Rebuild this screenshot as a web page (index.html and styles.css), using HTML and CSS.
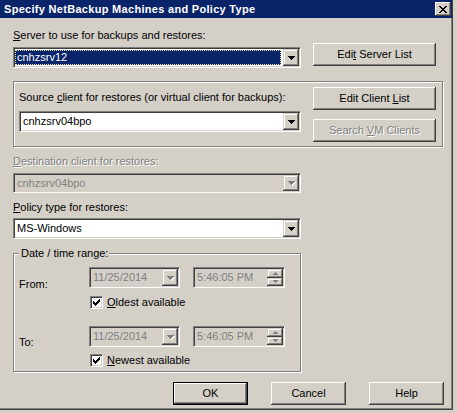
FILE: index.html
```html
<!DOCTYPE html>
<html>
<head>
<meta charset="utf-8">
<title>Specify NetBackup Machines and Policy Type</title>
<link rel="stylesheet" href="styles.css">
</head>
<body>
<div class="window">
  <div class="titlebar">
    <span class="title">Specify NetBackup Machines and Policy Type</span>
    <span class="close">
      <svg width="8" height="7" viewBox="0 0 8 7" shape-rendering="crispEdges"><path d="M0 0h2v1H0zM6 0h2v1H6zM1 1h2v1H1zM5 1h2v1H5zM2 2h4v1H2zM3 3h2v1H3zM2 4h4v1H2zM1 5h2v1H1zM5 5h2v1H5zM0 6h2v1H0zM6 6h2v1H6z" fill="#000"/></svg>
    </span>
  </div>
  <div class="content">
    <div class="server-row">
      <div class="col-server">
        <div class="label"><u>S</u>erver to use for backups and restores:</div>
        <div class="combo combo-server">
          <div class="combo-text sel">cnhzsrv12</div>
          <span class="drop"><svg width="7" height="4" viewBox="0 0 7 4" shape-rendering="crispEdges"><path d="M0 0h7v1H0zM1 1h5v1H1zM2 2h3v1H2zM3 3h1v1H3z" fill="#000"/></svg></span>
        </div>
      </div>
      <button class="btn btn-side btn-server"><span>Edi<u>t</u> Server List</span></button>
    </div>

    <div class="group group-client">
      <div class="col-client">
        <div class="label">Source <u>c</u>lient for restores (or virtual client for backups):</div>
        <div class="combo combo-client">
          <div class="combo-text">cnhzsrv04bpo</div>
          <span class="drop"><svg width="7" height="4" viewBox="0 0 7 4" shape-rendering="crispEdges"><path d="M0 0h7v1H0zM1 1h5v1H1zM2 2h3v1H2zM3 3h1v1H3z" fill="#000"/></svg></span>
        </div>
      </div>
      <div class="col-buttons">
        <button class="btn btn-side"><span>Edit Client <u>L</u>ist</span></button>
        <button class="btn btn-side btn-vm disabled"><span>Search <u>V</u>M Clients</span></button>
      </div>
    </div>

    <div class="label label-dest disabled-text"><u>D</u>estination client for restores:</div>
    <div class="combo combo-dest is-disabled">
      <div class="combo-text">cnhzsrv04bpo</div>
      <span class="drop"><svg width="8" height="5" viewBox="0 0 8 5" shape-rendering="crispEdges"><path d="M1 1h7v1H1zM2 2h5v1H2zM3 3h3v1H3zM4 4h1v1H4z" fill="#fff"/><path d="M0 0h7v1H0zM1 1h5v1H1zM2 2h3v1H2zM3 3h1v1H3z" fill="#808080"/></svg></span>
    </div>

    <div class="label label-policy"><u>P</u>olicy type for restores:</div>
    <div class="combo combo-policy">
      <div class="combo-text">MS-Windows</div>
      <span class="drop"><svg width="7" height="4" viewBox="0 0 7 4" shape-rendering="crispEdges"><path d="M0 0h7v1H0zM1 1h5v1H1zM2 2h3v1H2zM3 3h1v1H3z" fill="#000"/></svg></span>
    </div>

    <fieldset class="daterange">
      <legend>Date / time range:</legend>
      <div class="dt-row">
        <span class="dt-label">From:</span>
        <div class="picker picker-date">
          <span class="picker-text">11/25/2014</span>
          <span class="drop"><svg width="8" height="5" viewBox="0 0 8 5" shape-rendering="crispEdges"><path d="M1 1h7v1H1zM2 2h5v1H2zM3 3h3v1H3zM4 4h1v1H4z" fill="#fff"/><path d="M0 0h7v1H0zM1 1h5v1H1zM2 2h3v1H2zM3 3h1v1H3z" fill="#808080"/></svg></span>
        </div>
        <div class="picker picker-time">
          <span class="picker-text">5:46:05 PM</span>
          <span class="spin">
            <span class="spin-btn"><svg width="5" height="3" viewBox="0 0 5 3" shape-rendering="crispEdges"><path d="M2 0h1v1H2zM1 1h3v1H1zM0 2h5v1H0z" fill="#808080"/></svg></span>
            <span class="spin-btn"><svg width="5" height="3" viewBox="0 0 5 3" shape-rendering="crispEdges"><path d="M0 0h5v1H0zM1 1h3v1H1zM2 2h1v1H2z" fill="#808080"/></svg></span>
          </span>
        </div>
      </div>
      <div class="check-row">
        <span class="checkbox"><svg width="7" height="7" viewBox="0 0 7 7" shape-rendering="crispEdges"><path d="M6 0h1v1H6zM5 1h2v1H5zM0 2h1v1H0zM4 2h3v1H4zM0 3h2v1H0zM3 3h3v1H3zM0 4h5v1H0zM1 5h3v1H1zM2 6h1v1H2z" fill="#000"/></svg></span>
        <span class="check-text"><u>O</u>ldest available</span>
      </div>
      <div class="dt-row dt-row-to">
        <span class="dt-label">To:</span>
        <div class="picker picker-date">
          <span class="picker-text">11/25/2014</span>
          <span class="drop"><svg width="8" height="5" viewBox="0 0 8 5" shape-rendering="crispEdges"><path d="M1 1h7v1H1zM2 2h5v1H2zM3 3h3v1H3zM4 4h1v1H4z" fill="#fff"/><path d="M0 0h7v1H0zM1 1h5v1H1zM2 2h3v1H2zM3 3h1v1H3z" fill="#808080"/></svg></span>
        </div>
        <div class="picker picker-time">
          <span class="picker-text">5:46:05 PM</span>
          <span class="spin">
            <span class="spin-btn"><svg width="5" height="3" viewBox="0 0 5 3" shape-rendering="crispEdges"><path d="M2 0h1v1H2zM1 1h3v1H1zM0 2h5v1H0z" fill="#808080"/></svg></span>
            <span class="spin-btn"><svg width="5" height="3" viewBox="0 0 5 3" shape-rendering="crispEdges"><path d="M0 0h5v1H0zM1 1h3v1H1zM2 2h1v1H2z" fill="#808080"/></svg></span>
          </span>
        </div>
      </div>
      <div class="check-row">
        <span class="checkbox"><svg width="7" height="7" viewBox="0 0 7 7" shape-rendering="crispEdges"><path d="M6 0h1v1H6zM5 1h2v1H5zM0 2h1v1H0zM4 2h3v1H4zM0 3h2v1H0zM3 3h3v1H3zM0 4h5v1H0zM1 5h3v1H1zM2 6h1v1H2z" fill="#000"/></svg></span>
        <span class="check-text"><u>N</u>ewest available</span>
      </div>
    </fieldset>

    <div class="dialog-buttons">
      <button class="btn btn-dlg btn-default"><span>OK</span></button>
      <button class="btn btn-dlg"><span>Cancel</span></button>
      <button class="btn btn-dlg btn-help"><span>Help</span></button>
    </div>
  </div>
</div>
</body>
</html>
```
FILE: styles.css
```css
* { box-sizing: border-box; }
html, body { margin: 0; padding: 0; }
body {
  background: #d4d0c8;
  font-family: "Liberation Sans", Arial, sans-serif;
  font-size: 11px;
  line-height: 13px;
  color: #000;
  width: 457px;
  height: 413px;
  overflow: hidden;
}
u { text-decoration: underline; text-underline-offset: 1px; }

.window {
  width: 453px;
  height: 410px;
  background: #d4d0c8;
  border-right: 1px solid #404040;
  border-bottom: 1px solid #404040;
  box-shadow: inset -1px -1px 0 #808080;
}

.titlebar {
  height: 18px;
  background: #0a246a;
  color: #fff;
  font-weight: bold;
  display: flex;
  align-items: center;
  justify-content: space-between;
  padding: 0 1px 0 4px;
}
.title { letter-spacing: 0.3px; white-space: nowrap; }
.close {
  width: 16px;
  height: 14px;
  background: #d4d0c8;
  box-shadow: inset -1px -1px 0 #404040, inset 1px 1px 0 #fff, inset -2px -2px 0 #808080;
  display: flex;
  align-items: center;
  justify-content: center;
  padding-right: 1px;
}
.close svg { display: block; }

.content { padding-left: 13px; }

.label { height: 13px; white-space: nowrap; }
.disabled-text { color: #808080; text-shadow: 1px 1px 0 #fff; }

/* buttons */
.btn {
  font-family: inherit;
  font-size: 11px;
  line-height: 13px;
  color: #000;
  background: #d4d0c8;
  border: 0;
  padding: 0;
  margin: 0;
  height: 23px;
  box-shadow: inset -1px -1px 0 #404040, inset 1px 1px 0 #fff, inset -2px -2px 0 #808080, inset 2px 2px 0 #d4d0c8;
  display: flex;
  align-items: center;
  justify-content: center;
  white-space: nowrap;
}
.btn.disabled { color: #808080; text-shadow: 1px 1px 0 #fff; }
.btn-side { width: 123px; }
.btn-dlg { width: 75px; }
.btn-default { border: 1px solid #000; }

/* combo */
.combo {
  display: flex;
  height: 21px;
  border: 1px solid;
  border-color: #808080 #fff #fff #808080;
  box-shadow: inset 1px 1px 0 #404040, inset -1px -1px 0 #d4d0c8;
  background: #fff;
  padding: 1px;
}
.combo-text {
  flex: 1;
  display: flex;
  align-items: center;
  padding-left: 2px;
  white-space: nowrap;
  overflow: hidden;
}
.combo-text.sel {
  background: #0a246a;
  color: #fff;
  margin: 1px 2px 1px 0;
  padding-left: 1px;
  border: 1px dotted #e6dfa6;
}
.drop {
  width: 16px;
  flex: none;
  background: #d4d0c8;
  box-shadow: inset -1px -1px 0 #404040, inset 1px 1px 0 #d4d0c8, inset -2px -2px 0 #808080, inset 2px 2px 0 #fff;
  display: flex;
  align-items: center;
  justify-content: center;
}
.drop svg { display: block; }
.combo.is-disabled { background: #d4d0c8; color: #808080; }
.combo.is-disabled .drop svg { margin-left: 1px; margin-top: 1px; }

/* server row */
.server-row { display: flex; gap: 12px; margin-top: 11px; }
.col-server { width: 288px; }
.combo-server { margin-top: 5px; }
.btn-server { margin-top: 14px; }

/* client group */
.group {
  border: 1px solid #808080;
  box-shadow: inset 1px 1px 0 #fff, 1px 1px 0 #fff;
}
.group-client {
  width: 430px;
  margin-top: 13px;
  display: flex;
  gap: 12px;
  padding: 5px 0 4px 5px;
}
.col-client { width: 282px; padding-top: 4px; }
.combo-client { margin-top: 7px; }
.col-buttons { display: flex; flex-direction: column; gap: 9px; }

.label-dest { margin-top: 8px; }
.combo-dest { width: 288px; height: 20px; margin-top: 5px; }
.label-policy { margin-top: 8px; }
.combo-policy { width: 288px; margin-top: 4px; }

/* date range */
.daterange {
  width: 288px;
  margin: 8px 0 0 0;
  padding: 7px 0 4px 0;
  border: 1px solid #808080;
  box-shadow: inset 1px 1px 0 #fff, 1px 1px 0 #fff;
  min-inline-size: 0;
}
.daterange legend {
  padding: 0 1px 0 2px;
  margin-left: 5px;
  background: #d4d0c8;
  line-height: 13px;
}
.dt-row { display: flex; padding-left: 5px; }
.dt-row-to { margin-top: 17px; }
.dt-label { width: 70px; margin-top: 11px; height: 13px; }
.dt-row-to .dt-label { margin-top: 10px; }

.picker {
  display: flex;
  height: 21px;
  border: 1px solid;
  border-color: #808080 #fff #fff #808080;
  box-shadow: inset 1px 1px 0 #404040, inset -1px -1px 0 #d4d0c8;
  background: #d4d0c8;
  padding: 1px;
  color: #808080;
}
.picker-date { width: 91px; }
.picker-time { width: 92px; margin-left: 13px; }
.picker-text { flex: 1; display: flex; align-items: center; padding-left: 2px; white-space: nowrap; }
.picker .drop svg { margin-left: 1px; margin-top: 1px; }
.spin { width: 16px; display: flex; flex-direction: column; }
.spin-btn {
  flex: 1;
  background: #d4d0c8;
  box-shadow: inset -1px -1px 0 #404040, inset 1px 1px 0 #d4d0c8, inset -2px -2px 0 #808080, inset 2px 2px 0 #fff;
  display: flex;
  align-items: center;
  justify-content: center;
}
.spin-btn svg { display: block; }

.check-row {
  display: flex;
  align-items: center;
  margin-top: 5px;
  margin-left: 76px;
  height: 13px;
}
.checkbox {
  width: 13px;
  height: 13px;
  border: 1px solid;
  border-color: #808080 #fff #fff #808080;
  box-shadow: inset 1px 1px 0 #404040, inset -1px -1px 0 #d4d0c8;
  background: #fff;
  display: flex;
  align-items: center;
  justify-content: center;
}
.checkbox svg { display: block; }
.check-text { margin-left: 4px; white-space: nowrap; }

.dialog-buttons {
  display: flex;
  margin-top: 10px;
  padding-left: 160px;
}
.dialog-buttons .btn + .btn { margin-left: 23px; }
.dialog-buttons .btn-help { margin-left: 22px; }
```
